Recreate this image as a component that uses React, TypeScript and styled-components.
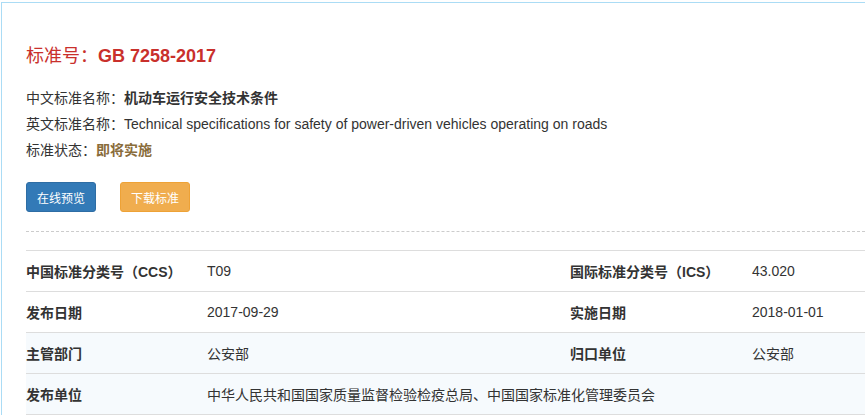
import React from 'react'
import styled, { createGlobalStyle } from 'styled-components'

const GlobalStyle = createGlobalStyle`
    html, body {
        margin: 0;
        padding: 0;
        background: #fff;
        overflow: hidden;
    }
    body {
        font-family: "Liberation Sans", "Noto Sans CJK SC", sans-serif;
        font-size: 14px;
        color: #333;
    }
`

const rows = [
    [
        { label: '中国标准分类号（CCS）', value: 'T09' },
        { label: '国际标准分类号（ICS）', value: '43.020' },
    ],
    [
        { label: '发布日期', value: '2017-09-29' },
        { label: '实施日期', value: '2018-01-01' },
    ],
    [
        { label: '主管部门', value: '公安部' },
        { label: '归口单位', value: '公安部' },
    ],
]

export default function App() {
    return (
        <>
            <GlobalStyle />
            <Panel>
                <Title>
                    标准号：<strong>GB 7258-2017</strong>
                </Title>
                <InfoList>
                    <InfoLine>
                        中文标准名称：<Strong>机动车运行安全技术条件</Strong>
                    </InfoLine>
                    <InfoLine>
                        英文标准名称：Technical specifications for safety of power-driven vehicles operating on roads
                    </InfoLine>
                    <InfoLine>
                        标准状态：<Status>即将实施</Status>
                    </InfoLine>
                </InfoList>
                <Buttons>
                    <Button $color="#337ab7" $border="#2e6da4">在线预览</Button>
                    <Button $color="#f0ad4e" $border="#eea236">下载标准</Button>
                </Buttons>
                <Dashed />
                <Table>
                    <colgroup>
                        <col style={{ width: 181 }} />
                        <col style={{ width: 363 }} />
                        <col style={{ width: 182 }} />
                        <col />
                    </colgroup>
                    <tbody>
                        {rows.map((row, i) => (
                            <Row key={i} $tinted={i >= 2}>
                                {row.map((cell) => (
                                    <React.Fragment key={cell.label}>
                                        <Label>{cell.label}</Label>
                                        <Value>{cell.value}</Value>
                                    </React.Fragment>
                                ))}
                            </Row>
                        ))}
                        <Row $tinted>
                            <Label>发布单位</Label>
                            <Value colSpan={3}>中华人民共和国国家质量监督检验检疫总局、中国国家标准化管理委员会</Value>
                        </Row>
                    </tbody>
                </Table>
            </Panel>
        </>
    )
}

const Panel = styled.div`
    margin: 2px 0 0 1px;
    width: 864px;
    border-top: 1px solid #abdcf5;
    border-left: 1px solid #abdcf5;
    padding: 40px 0 0 24px;
    box-sizing: border-box;
`

const Title = styled.h2`
    margin: 0;
    font-size: 18px;
    line-height: 26px;
    font-weight: normal;
    color: #c9302c;
    strong {
        font-weight: bold;
    }
`

const InfoList = styled.div`
    margin-top: 16px;
`

const InfoLine = styled.div`
    line-height: 26px;
    font-size: 14px;
    color: #333;
`

const Strong = styled.b`
    font-weight: bold;
`

const Status = styled.b`
    font-weight: bold;
    color: #8a6d3b;
`

const Buttons = styled.div`
    display: flex;
    gap: 24px;
    margin-top: 19px;
`

const Button = styled.button<{ $color: string; $border: string }>`
    height: 30px;
    padding: 0 10px;
    font-family: "Liberation Sans", "Noto Sans CJK SC", sans-serif;
    font-size: 12px;
    color: #fff;
    background: ${(p) => p.$color};
    border: 1px solid ${(p) => p.$border};
    border-radius: 3px;
`

const Dashed = styled.div`
    margin-top: 19px;
    border-top: 1px dashed #ccc;
`

const Table = styled.table`
    margin-top: 18px;
    width: 100%;
    table-layout: fixed;
    border-collapse: collapse;
    border-top: 1px solid #ddd;
`

const Row = styled.tr<{ $tinted?: boolean }>`
    height: 41px;
    border-bottom: 1px solid #ddd;
    background: ${(p) => (p.$tinted ? '#f6fafd' : '#fff')};
`

const Label = styled.td`
    padding: 0;
    font-weight: bold;
    font-size: 14px;
    color: #333;
    white-space: nowrap;
`

const Value = styled.td`
    padding: 0;
    font-size: 14px;
    color: #333;
    white-space: nowrap;
`
